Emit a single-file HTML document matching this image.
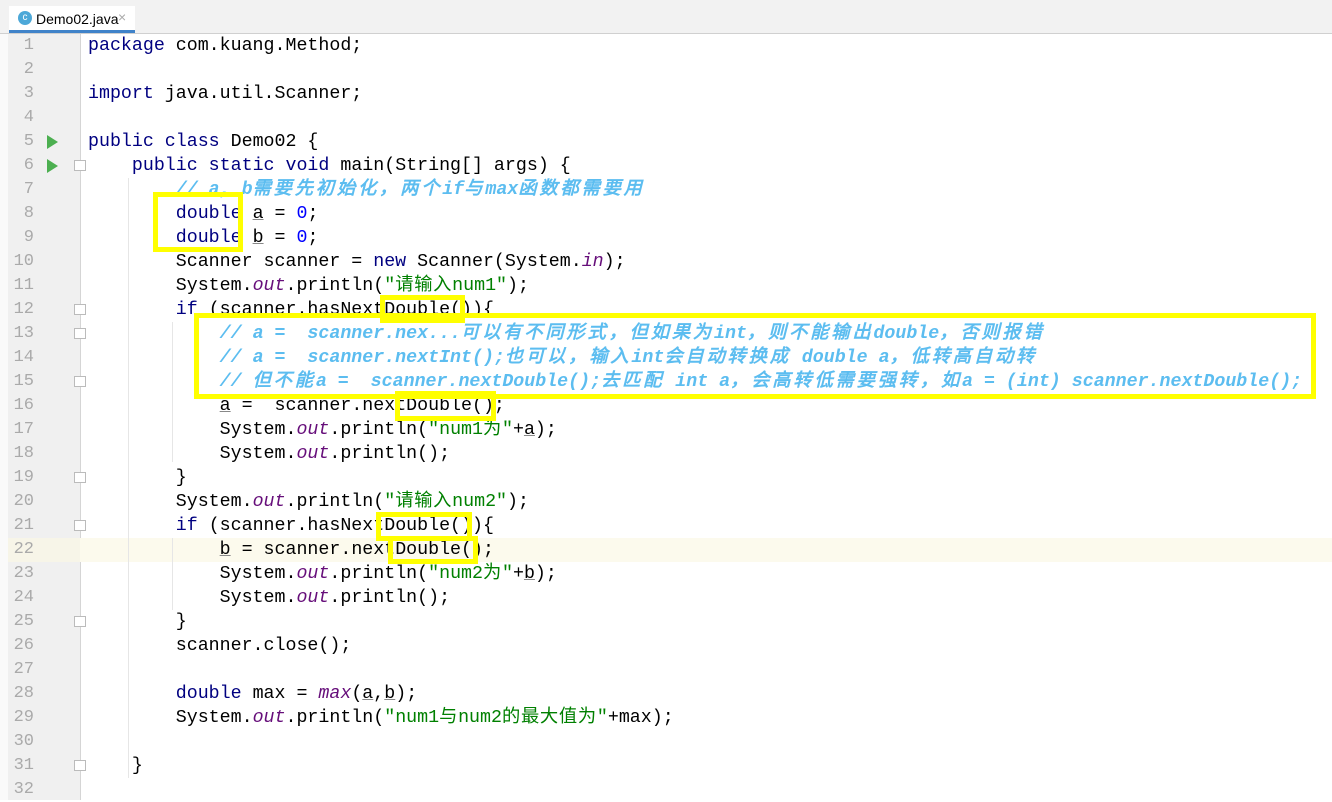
<!DOCTYPE html>
<html><head><meta charset="utf-8"><style>
body{margin:0;width:1332px;height:800px;overflow:hidden;background:#fff;position:relative;font-family:"Liberation Mono","Noto Sans CJK SC",monospace;}
.tabbar{position:absolute;left:0;top:0;width:1332px;height:33px;background:#f2f2f2;border-bottom:1px solid #d0d0d0;}
.tab{position:absolute;left:9px;top:6px;width:126px;height:27px;background:#fff;border-bottom:3px solid #4083c9;box-sizing:border-box;font:14px "Liberation Sans",sans-serif;}
.gut{position:absolute;left:8px;top:34px;width:72px;height:766px;background:#f0f0f0;border-right:1px solid #d5d5d5;}
.lstrip{position:absolute;left:0;top:34px;width:8px;height:766px;background:#fafafa;border-right:1px solid #ddd;}
.hl{position:absolute;left:8px;top:538px;width:1324px;height:24px;background:#fcfaed;}
.hl2{position:absolute;left:8px;top:538px;width:72px;height:24px;background:#f7f5e8;}
.nums{position:absolute;left:8px;top:34px;width:26px;text-align:right;font-size:17px;line-height:24px;color:#aaa;}
pre{position:absolute;left:88px;top:34px;margin:0;font-size:18.3px;line-height:24px;color:#000;}
.k{color:#000080}.n{color:#0000ff}.s{color:#008000}.o{color:#660e7a;font-style:italic}
.c{color:#5cbdf0;font-style:italic;font-weight:bold}
.cj{letter-spacing:2.8px}
.sj{letter-spacing:0.7px}
.u{text-decoration:underline;text-decoration-color:#888}
.y{position:absolute;border:5px solid #ffff00;box-sizing:border-box;}
.run{position:absolute;left:47px;width:0;height:0;border-left:11px solid #4caf50;border-top:7px solid transparent;border-bottom:7px solid transparent;}
.fold{position:absolute;left:74px;width:10px;height:9px;border:1px solid #bbb;background:#fff;}
.guide{position:absolute;width:1px;background:#e6e6e6;}
</style></head><body>
<div class="tabbar"><div class="tab"><span style="position:absolute;left:9px;top:5px;width:14px;height:14px;border-radius:50%;background:#4da8d8;color:#fff;font-size:10px;text-align:center;line-height:14px">c</span><span style="position:absolute;left:27px;top:5px;color:#000">Demo02.java</span><span style="position:absolute;left:109px;top:3px;color:#aaa">×</span></div></div>
<div class="lstrip"></div>
<div class="gut"></div>
<div class="hl"></div><div class="hl2"></div>
<div class="guide" style="left:128px;top:178px;height:600px"></div>
<div class="guide" style="left:172px;top:322px;height:140px"></div>
<div class="guide" style="left:172px;top:538px;height:72px"></div>
<div class="nums">1<br>2<br>3<br>4<br>5<br>6<br>7<br>8<br>9<br>10<br>11<br>12<br>13<br>14<br>15<br>16<br>17<br>18<br>19<br>20<br>21<br>22<br>23<br>24<br>25<br>26<br>27<br>28<br>29<br>30<br>31<br>32</div>
<div class="run" style="top:135px"></div><div class="run" style="top:159px"></div>
<div class="fold" style="top:160px"></div><div class="fold" style="top:304px"></div><div class="fold" style="top:328px"></div><div class="fold" style="top:376px"></div><div class="fold" style="top:472px"></div><div class="fold" style="top:520px"></div><div class="fold" style="top:616px"></div><div class="fold" style="top:760px"></div>
<pre><span class="k">package</span> com.kuang.Method;

<span class="k">import</span> java.util.Scanner;

<span class="k">public class</span> Demo02 {
    <span class="k">public static void</span> main(String[] args) {
        <span class="c">// a, b<span class="cj">需要先初始化，两个</span>if<span class="cj">与</span>max<span class="cj">函数都需要用</span></span>
        <span class="k">double</span> <span class="u">a</span> = <span class="n">0</span>;
        <span class="k">double</span> <span class="u">b</span> = <span class="n">0</span>;
        Scanner scanner = <span class="k">new</span> Scanner(System.<span class="o">in</span>);
        System.<span class="o">out</span>.println(<span class="s">"<span class="sj">请输入</span>num1"</span>);
        <span class="k">if</span> (scanner.hasNextDouble()){
            <span class="c">// a =  scanner.nex...<span class="cj">可以有不同形式，但如果为</span>int<span class="cj">，则不能输出</span>double<span class="cj">，否则报错</span></span>
            <span class="c">// a =  scanner.nextInt();<span class="cj">也可以，输入</span>int<span class="cj">会自动转换成</span> double a<span class="cj">，低转高自动转</span></span>
            <span class="c">// <span class="cj">但不能</span>a =  scanner.nextDouble();<span class="cj">去匹配</span> int a<span class="cj">，会高转低需要强转，如</span>a = (int) scanner.nextDouble();</span>
            <span class="u">a</span> =  scanner.nextDouble();
            System.<span class="o">out</span>.println(<span class="s">"num1<span class="sj">为</span>"</span>+<span class="u">a</span>);
            System.<span class="o">out</span>.println();
        }
        System.<span class="o">out</span>.println(<span class="s">"<span class="sj">请输入</span>num2"</span>);
        <span class="k">if</span> (scanner.hasNextDouble()){
            <span class="u">b</span> = scanner.nextDouble();
            System.<span class="o">out</span>.println(<span class="s">"num2<span class="sj">为</span>"</span>+<span class="u">b</span>);
            System.<span class="o">out</span>.println();
        }
        scanner.close();

        <span class="k">double</span> max = <span class="o">max</span>(<span class="u">a</span>,<span class="u">b</span>);
        System.<span class="o">out</span>.println(<span class="s">"num1<span class="sj">与</span>num2<span class="sj">的最大值为</span>"</span>+max);

    }
</pre>
<div class="y" style="left:153px;top:192px;width:90px;height:60px"></div>
<div class="y" style="left:380px;top:295px;width:85px;height:28px"></div>
<div class="y" style="left:194px;top:313px;width:1122px;height:86px"></div>
<div class="y" style="left:395px;top:391px;width:101px;height:30px"></div>
<div class="y" style="left:376px;top:512px;width:96px;height:29px"></div>
<div class="y" style="left:388px;top:536px;width:90px;height:28px"></div>
</body></html>
